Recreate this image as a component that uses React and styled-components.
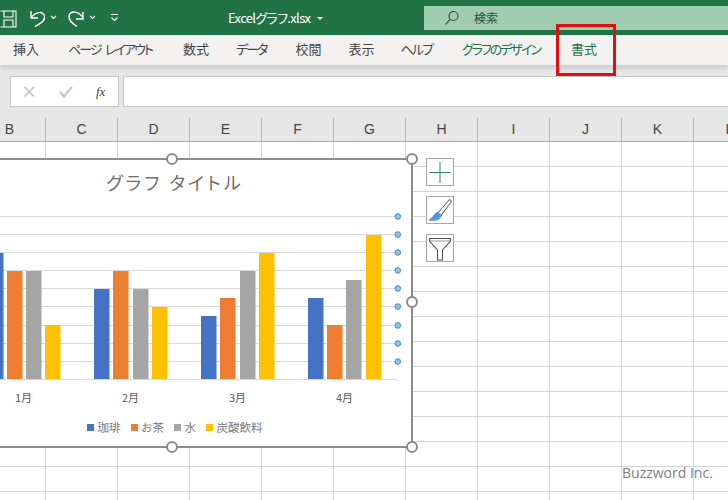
import React from "react";
import styled, { createGlobalStyle } from "styled-components";

const Global = createGlobalStyle`
  html, body { margin: 0; padding: 0; background: #fff; }
  body { font-family: "Noto Sans CJK JP", "Noto Sans", sans-serif; }
`;

const Page = styled.div`
  position: relative;
  width: 728px;
  height: 500px;
  overflow: hidden;
  display: flex;
  flex-direction: column;
  background: #fff;
`;

const TitleBar = styled.header`
  height: 35px;
  flex: none;
  background: #217346;
  color: #fff;
  display: flex;
  align-items: flex-start;
`;

const QuickAccess = styled.svg`
  width: 130px;
  height: 35px;
  flex: none;
  display: block;
`;

const FileName = styled.div`
  margin-left: 98px;
  width: 196px;
  height: 35px;
  flex: none;
  display: flex;
  align-items: center;
  font-size: 13px;
  font-feature-settings: "palt";
  letter-spacing: -0.65px;
  white-space: nowrap;
`;

const FileCaret = styled.i`
  margin-left: 7px;
  margin-top: 2px;
  border-left: 3px solid transparent;
  border-right: 3px solid transparent;
  border-top: 3px solid #fff;
`;

const SearchBox = styled.div`
  flex: 1;
  height: 24px;
  margin-top: 6px;
  padding: 0 0 2px 20px;
  box-sizing: border-box;
  background: #a0cdb0;
  color: #2f4a3a;
  display: flex;
  align-items: center;
  gap: 14px;
  font-size: 12px;
  svg { margin-top: 2px; }
`;

const Ribbon = styled.nav`
  height: 30px;
  flex: none;
  box-sizing: border-box;
  padding: 0 0 3px 13px;
  background: #f3f2f1;
  display: flex;
  align-items: center;
  gap: 30px;
  position: relative;
  z-index: 1;
  box-shadow: 0 3px 5px rgba(0, 0, 0, 0.12);
`;

const Tab = styled.span`
  font-size: 13px;
  font-feature-settings: "palt";
  white-space: nowrap;
  letter-spacing: ${(p) => p.$tight || 0}px;
  word-spacing: ${(p) => (p.$tight ? 3 : 0)}px;
  margin-left: ${(p) => p.$nudge || 0}px;
  color: ${(p) => (p.$context ? "#1f7246" : "#444")};
`;

const FormulaArea = styled.div`
  height: 52px;
  flex: none;
  background: #e6e6e6;
  display: flex;
  gap: 4px;
  padding: 11px 0 10px 10px;
  box-sizing: border-box;
`;

const FormulaButtons = styled.div`
  width: 109px;
  flex: none;
  box-sizing: border-box;
  background: #fff;
  border: 1px solid #c6c6c6;
`;

const FormulaInput = styled.div`
  flex: 1;
  background: #fff;
  border: 1px solid #c6c6c6;
  border-right: none;
`;

const FxGlyph = styled.text`
  font-family: "Liberation Serif", serif;
  font-style: italic;
  font-size: 13px;
  fill: #444;
`;

const ColumnHeader = styled.div`
  height: 24px;
  flex: none;
  background: #e6e6e6;
  border-bottom: 1px solid #a9a9a9;
  display: flex;
  margin-left: -26px;
  width: 900px;
`;

const ColumnLabel = styled.div`
  width: 72px;
  flex: none;
  box-sizing: border-box;
  padding-right: 1px;
  display: flex;
  align-items: center;
  justify-content: center;
  font-family: "Liberation Sans", sans-serif;
  font-size: 14px;
  color: #444;
  position: relative;
  &::after {
    content: "";
    position: absolute;
    right: 0;
    top: 1px;
    bottom: 0;
    width: 1px;
    background: #b4b4b4;
  }
`;

const Sheet = styled.div`
  flex: 1;
  margin-left: -26px;
  width: 900px;
  display: grid;
  grid-template-columns: repeat(12, 72px);
  grid-auto-rows: 25px;
  overflow: hidden;
`;

const Cell = styled.div`
  box-sizing: border-box;
  border-right: 1px solid #d4d4d4;
  border-bottom: 1px solid #d4d4d4;
`;

const ChartFrame = styled.section`
  position: absolute;
  left: -120px;
  top: 158px;
  width: 533px;
  height: 290px;
  box-sizing: border-box;
  background: #fff;
  border: 2px solid #8c8c8c;
`;

const ChartTitle = styled.div`
  position: relative;
  padding-left: 57px;
  margin-top: 9px;
  text-align: center;
  font-size: 18px;
  line-height: 26px;
  letter-spacing: 3px;
  font-feature-settings: "palt";
  color: #6e6e6e;
`;

const ChartPlot = styled.svg`
  position: absolute;
  left: -2px;
  top: -2px;
  width: 533px;
  height: 290px;
`;

const AxisLabels = styled.div`
  position: absolute;
  left: 88px;
  top: 229px;
  display: flex;
`;

const AxisLabel = styled.span`
  width: 107px;
  text-align: center;
  font-size: 11px;
  line-height: 16px;
  color: #595959;
`;

const Legend = styled.div`
  position: absolute;
  left: 205px;
  top: 259px;
  display: flex;
  align-items: center;
  gap: 10px;
  font-size: 11.5px;
  line-height: 16px;
  color: #7a7a7a;
`;

const LegendItem = styled.span`
  display: flex;
  align-items: center;
  gap: 3.5px;
  &::before {
    content: "";
    width: 7px;
    height: 7px;
    background: ${(p) => p.$color};
  }
`;

const Handles = styled.svg`
  position: absolute;
  left: 160px;
  top: 148px;
  width: 264px;
  height: 310px;
  pointer-events: none;
`;

const SideButtons = styled.div`
  position: absolute;
  left: 426px;
  top: 158px;
  display: flex;
  flex-direction: column;
  gap: 10px;
`;

const SideButton = styled.div`
  width: 28px;
  height: 28px;
  box-sizing: border-box;
  background: #fff;
  border: 1px solid #a6a6a6;
  display: flex;
  align-items: center;
  justify-content: center;
  svg { display: block; }
`;

const Highlight = styled.div`
  position: absolute;
  left: 556px;
  top: 24px;
  width: 60px;
  height: 52px;
  box-sizing: border-box;
  border: 3px solid #e01010;
  z-index: 2;
`;

const Watermark = styled.div`
  position: absolute;
  left: 622px;
  top: 463px;
  font-family: "Open Sans", "Liberation Sans", sans-serif;
  font-size: 14px;
  line-height: 19px;
  color: #7f7f7f;
  white-space: nowrap;
`;

const columns = ["B", "C", "D", "E", "F", "G", "H", "I", "J", "K", "L", "M"];
const tabs = [
  ["挿入", 0, 0],
  ["ページ レイアウト", -1.9, -1],
  ["数式", 0, 1],
  ["データ", -2, -3],
  ["校閲", 0, -1],
  ["表示", 0, -3],
  ["ヘルプ", -1.8, -4],
];
const contextTabs = [
  ["グラフのデザイン", -2, -0.5],
  ["書式", 0, 1],
];
const colors = ["#4472c4", "#ed7d31", "#a5a5a5", "#ffc000"];
const groups = [
  [[-12, 253], [7, 271], [26, 271], [45, 325]],
  [[94, 289], [113, 271], [133, 289], [152, 307]],
  [[201, 316], [220, 298], [240, 271], [259, 253]],
  [[308, 298], [327, 325], [346, 280], [366, 235]],
];
const gridY = [216, 234, 252, 270, 288, 306, 325, 343, 361];
const OX = -120;
const OY = 158;

function QuickAccessIcons() {
  return (
    <QuickAccess viewBox="0 0 130 35" fill="none" stroke="#fff">
      <path d="M0.5 11 H16 V27 H0.5 M4 11 V17 H13 V11 M4 27 V20 H13 V27" strokeWidth="1.1" />
      <path d="M31 11 V18 H38 M31 18 C35 12 44 10 44.5 17 C45 22 39 24 35 26.5" strokeWidth="1.4" />
      <path d="M51 16 L53.5 18.5 L56 16" strokeWidth="1.1" />
      <path d="M83 12 V19 H76 M83 18 C80 12 70 9 69 16 C68.5 21 73 24 77 26.5" strokeWidth="1.4" />
      <path d="M90 16 L92.5 18.5 L95 16" strokeWidth="1.1" />
      <path d="M111 14.5 H118 M111.5 17.5 L114.5 20.5 L117.5 17.5" strokeWidth="1.1" />
    </QuickAccess>
  );
}

export default function App() {
  return (
    <Page>
      <Global />
      <TitleBar>
        <QuickAccessIcons />
        <FileName>
          Excelグラフ.xlsx<FileCaret />
        </FileName>
        <SearchBox>
          <svg width="16" height="16" viewBox="0 0 16 16" fill="none" stroke="#2f4a3a" strokeWidth="1.1">
            <circle cx="9.5" cy="6" r="4.5" />
            <path d="M6.2 9.3 L1.5 14.5" />
          </svg>
          検索
        </SearchBox>
      </TitleBar>
      <Ribbon>
        {tabs.map(([t, s, n]) => (
          <Tab key={t} $tight={s} $nudge={n}>{t}</Tab>
        ))}
        {contextTabs.map(([t, s, n]) => (
          <Tab key={t} $tight={s} $nudge={n} $context>{t}</Tab>
        ))}
      </Ribbon>
      <FormulaArea>
        <FormulaButtons>
          <svg width="107" height="29" viewBox="0 0 107 29" fill="none">
            <path d="M13.5 10 L23 19.5 M23 10 L13.5 19.5" stroke="#c4c4c4" strokeWidth="1.6" />
            <path d="M49 15 L53 19.5 L61 10" stroke="#c4c4c4" strokeWidth="2" />
            <FxGlyph x="85" y="19">fx</FxGlyph>
          </svg>
        </FormulaButtons>
        <FormulaInput />
      </FormulaArea>
      <ColumnHeader>
        {columns.map((c) => (
          <ColumnLabel key={c}>{c}</ColumnLabel>
        ))}
      </ColumnHeader>
      <Sheet>
        {Array.from({ length: 12 * 15 }, (_, i) => (
          <Cell key={i} />
        ))}
      </Sheet>

      <ChartFrame>
        <ChartPlot viewBox={`${OX} ${OY} 533 290`}>
          {gridY.map((y) => (
            <path key={y} d={`M${OX + 2} ${y + 0.5} H397`} stroke="#d9d9d9" strokeWidth="1" />
          ))}
          <path d={`M${OX + 2} 379.5 H397`} stroke="#d9d9d9" strokeWidth="1" />
          {groups.map((g, gi) =>
            g.map(([x, top], i) => (
              <rect key={`${gi}-${i}`} x={x} y={top} width={15.5} height={379 - top} fill={colors[i]} />
            ))
          )}
          {gridY.map((y) => (
            <circle key={y} cx="397.8" cy={y + 0.5} r="2.8" fill="#8fc3ea" stroke="#3f8ccb" strokeWidth="1" />
          ))}
        </ChartPlot>
        <ChartTitle>グラフ タイトル</ChartTitle>
        <AxisLabels>
          {["1月", "2月", "3月", "4月"].map((m) => (
            <AxisLabel key={m}>{m}</AxisLabel>
          ))}
        </AxisLabels>
        <Legend>
          <LegendItem $color={colors[0]}>珈琲</LegendItem>
          <LegendItem $color={colors[1]}>お茶</LegendItem>
          <LegendItem $color={colors[2]}>水</LegendItem>
          <LegendItem $color={colors[3]}>炭酸飲料</LegendItem>
        </Legend>
      </ChartFrame>

      <Handles viewBox="160 148 264 310">
        {[[172, 159], [412, 159], [412, 302], [172, 447], [412, 447]].map(([x, y]) => (
          <circle key={`${x}-${y}`} cx={x} cy={y} r="5" fill="#fff" stroke="#8c8c8c" strokeWidth="2" />
        ))}
      </Handles>

      <SideButtons>
        <SideButton>
          <svg width="24" height="24" viewBox="0 0 24 24" fill="none" stroke="#2e8b57" strokeWidth="1">
            <path d="M12 2 V23 M1.5 12.5 H22.5" />
          </svg>
        </SideButton>
        <SideButton>
          <svg width="26" height="26" viewBox="0 0 26 26" fill="none">
            <path d="M11 16 L22 3 C23 2 25 3.5 24 5 L14 18.5 Z" fill="#fff" stroke="#555" strokeWidth="1" />
            <path d="M11 15 C7 16 7 20 2 23 C8 24.5 13 23 14.5 18.5 Z" fill="#4f9ad8" stroke="#3f86c6" strokeWidth="0.6" />
          </svg>
        </SideButton>
        <SideButton>
          <svg width="26" height="26" viewBox="0 0 26 26" fill="none" stroke="#555" strokeWidth="1.1">
            <path d="M2.5 3.5 H23.5 V6 L15.5 15 V25 H10.5 V15 L2.5 6 Z" />
            <path d="M2.5 6 H23.5" strokeWidth="0.6" />
          </svg>
        </SideButton>
      </SideButtons>

      <Highlight />
      <Watermark>Buzzword Inc.</Watermark>
    </Page>
  );
}
